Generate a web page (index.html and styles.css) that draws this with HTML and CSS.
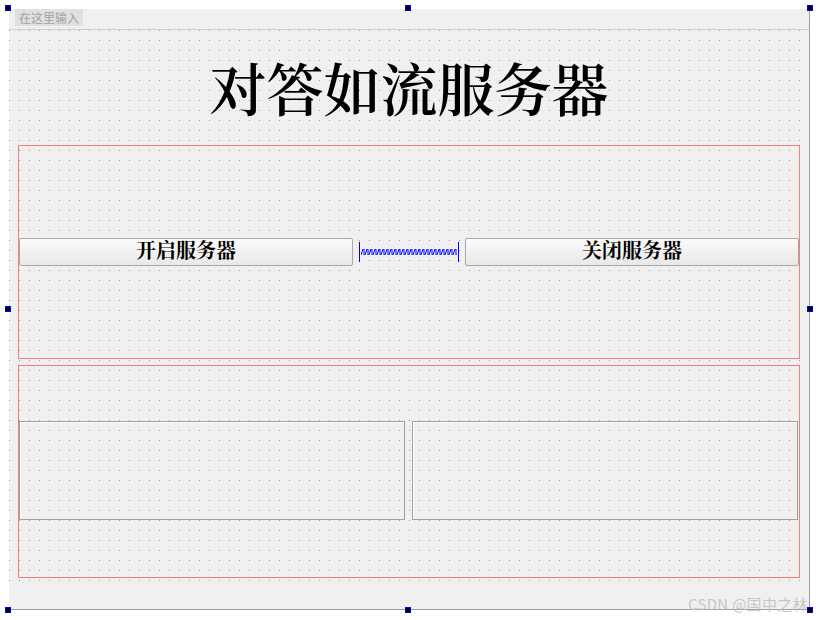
FILE: index.html
```html
<!DOCTYPE html>
<html lang="zh-CN">
<head>
    <meta charset="UTF-8">
    <title>对答如流服务器</title>
    <link rel="stylesheet" href="styles.css">
</head>
<body>
    <div class="form">
        <div class="menubar">
            <span class="menu-hint">在这里输入</span>
        </div>
        <div class="central">
            <div class="title">对答如流服务器</div>
            <div class="layout-box controls">
                <button class="push-btn">开启服务器</button>
                <svg class="spacer" width="100" height="28" viewBox="0 0 100 28">
                    <defs>
                        <pattern id="spring" width="4" height="6" patternUnits="userSpaceOnUse" x="2" y="11">
                            <path d="M0 6 L2 0 L3 0 L3 6 L4 6" fill="none" stroke="#0000ff" stroke-width="1"/>
                        </pattern>
                    </defs>
                    <rect x="0" y="4" width="1" height="20" fill="#0000ff"/>
                    <rect x="99" y="4" width="1" height="20" fill="#0000ff"/>
                    <rect x="2" y="11" width="96" height="6" fill="url(#spring)"/>
                </svg>
                <button class="push-btn">关闭服务器</button>
            </div>
            <div class="layout-box panels">
                <div class="frame"></div>
                <div class="frame"></div>
            </div>
        </div>
        <div class="statusbar"></div>
    </div>

    <!-- selection handles -->
    <span class="handle h-tl"></span>
    <span class="handle h-tm"></span>
    <span class="handle h-tr"></span>
    <span class="handle h-ml"></span>
    <span class="handle h-mr"></span>
    <span class="handle h-bl"></span>
    <span class="handle h-bm"></span>
    <span class="handle h-br"></span>

    <div class="watermark">CSDN @国中之林</div>
</body>
</html>
```

FILE: styles.css
```css
* {
    margin: 0;
    padding: 0;
    box-sizing: border-box;
}

body {
    background: #ffffff;
    font-family: "Noto Sans CJK SC", "Noto Sans", sans-serif;
    position: relative;
    width: 816px;
    height: 620px;
    overflow: hidden;
}

.form {
    position: absolute;
    left: 9px;
    top: 9px;
    width: 801px;
    height: 601px;
    background: #f0f0f0;
    border-right: 1px solid #a0a0a0;
    border-bottom: 1px solid #a0a0a0;
    display: flex;
    flex-direction: column;
}

.menubar {
    height: 21px;
    border-bottom: 1px solid #cdcdcd;
    display: flex;
    align-items: flex-start;
    padding-left: 6px;
}

.menu-hint {
    height: 17px;
    padding: 0 4px;
    background: #e0e0e0;
    color: #a0a0a0;
    font-size: 12px;
    line-height: 17px;
}

.central {
    height: 558px;
    padding: 0 9px;
    background-image: conic-gradient(from 270deg at 1px 1px, #9a9a9a 90deg, transparent 0);
    background-size: 10px 10px;
    display: flex;
    flex-direction: column;
}

.title {
    height: 115px;
    display: flex;
    align-items: center;
    justify-content: center;
    font-family: "Noto Serif CJK SC", "Noto Sans CJK SC", serif;
    font-size: 57px;
    font-weight: 600;
    color: #000;
    padding-bottom: 4px;
}

.layout-box {
    border: 1px solid #f08080;
}

.controls {
    height: 214px;
    display: flex;
    align-items: center;
}

.push-btn {
    flex: 1;
    height: 28px;
    border: 1px solid #a9a9a9;
    border-radius: 2px;
    background: linear-gradient(#fbfbfb, #e8e8e8);
    font-family: "Noto Serif CJK SC", "Noto Sans CJK SC", serif;
    font-size: 20px;
    font-weight: bold;
    line-height: 22px;
    color: #000;
    padding-bottom: 4px;
}

.spacer {
    margin: 0 6px;
    flex: none;
}

.panels {
    margin-top: 6px;
    height: 213px;
    display: flex;
    align-items: flex-start;
    gap: 7px;
    padding-top: 55px;
}

.frame {
    width: 386px;
    height: 99px;
    border: 1px solid #a0a0a0;
    box-shadow: inset 1px 1px 0 #ffffff;
}

.statusbar {
    flex: 1;
}

.handle {
    position: absolute;
    width: 6px;
    height: 6px;
    background: #000;
    border: 1px solid #0000ff;
}

.h-tl { left: 5px; top: 5px; }
.h-tm { left: 405px; top: 5px; }
.h-tr { left: 807px; top: 5px; }
.h-ml { left: 5px; top: 306px; }
.h-mr { left: 807px; top: 306px; }
.h-bl { left: 5px; top: 607px; }
.h-bm { left: 405px; top: 607px; }
.h-br { left: 807px; top: 607px; }

.watermark {
    position: absolute;
    left: 688px;
    top: 593px;
    font-size: 15px;
    letter-spacing: 0.3px;
    color: rgba(190, 190, 190, 0.85);
    white-space: nowrap;
}
```
